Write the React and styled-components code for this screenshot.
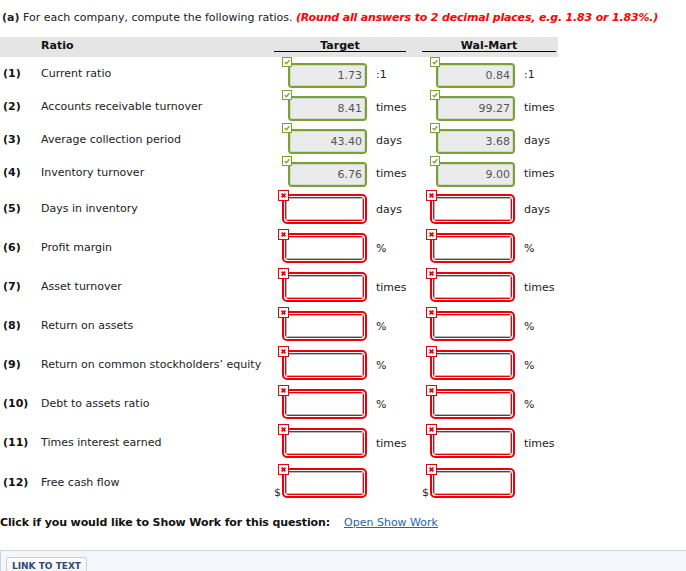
import React from "react";
import styled, { createGlobalStyle } from "styled-components";

const Global = createGlobalStyle`
  html, body { margin: 0; padding: 0; background: #fff; }
  body { font-family: "DejaVu Sans", Verdana, sans-serif; font-size: 11px; color: #222; }
`;

const Page = styled.div`
  width: 686px;
  height: 571px;
  overflow: hidden;
  display: flex;
  flex-direction: column;
`;

const Heading = styled.div`
  margin: 11px 0 0 2px;
  line-height: 13px;
  white-space: nowrap;
`;

const Strong = styled.b`
  font-weight: bold;
`;

const Hint = styled.span`
  color: #f00;
  font-weight: bold;
  font-style: italic;
  letter-spacing: -0.17px;
`;

const Table = styled.div`
  margin-top: 13px;
  width: 558px;
  display: flex;
  flex-direction: column;
`;

const HeaderRow = styled.div`
  display: grid;
  grid-template-columns: 274px 132px 16px 136px;
  background: #e5e5e5;
  height: 20px;
  font-weight: bold;
  color: #111;
`;

const HeadCell = styled.div`
  height: 14px;
  line-height: 17px;
  text-align: ${(p) => (p.$left ? "left" : "center")};
  padding-left: ${(p) => (p.$left ? "41px" : "0")};
  border-bottom: ${(p) => (p.$line ? "1px solid #000" : "none")};
  margin-right: ${(p) => (p.$trim ? "2px" : "0")};
`;

const Row = styled.div`
  display: grid;
  grid-template-columns: 41px 233px 132px 16px 136px;
  height: ${(p) => p.$h}px;
`;

const Num = styled.div`
  font-weight: bold;
  padding-left: 3px;
  display: flex;
  align-items: center;
  color: #111;
`;

const Label = styled.div`
  display: flex;
  align-items: center;
  white-space: nowrap;
`;

const Cell = styled.div`
  display: flex;
  align-items: flex-start;
  padding-top: ${(p) => p.$pt}px;
  padding-left: ${(p) => p.$pl}px;
`;

const Field = styled.div`
  position: relative;
  flex: none;
`;

const GreenBox = styled.div`
  width: 75px;
  height: 21px;
  border: 2px solid #78a232;
  border-radius: 4px;
  background: #fff;
  display: flex;
`;

const GreenInput = styled.div`
  flex: 1;
  background: #ebebeb;
  border: 1px solid #d6d6d6;
  border-radius: 2px;
  color: #555;
  text-align: right;
  padding-right: 2px;
  line-height: 19px;
`;

const RedBox = styled.div`
  width: 79px;
  height: 24px;
  border: 2px solid #e8000a;
  border-radius: 5px;
  padding: 1px;
  background: #fff;
  display: flex;
`;

const RedInner = styled.div`
  flex: 1;
  border: 1px solid #e8000a;
  border-radius: 3px;
  display: flex;
`;

const RedInput = styled.div`
  flex: 1;
  border: 1px solid #b8b8b8;
  background: #fff;
`;

const Badge = styled.svg`
  position: absolute;
  left: ${(p) => p.$off}px;
  top: ${(p) => p.$off}px;
  display: block;
`;

const Dollar = styled.span`
  position: absolute;
  left: -8px;
  bottom: -1px;
  line-height: 13px;
  color: #222;
`;

const Unit = styled.div`
  align-self: center;
  margin-left: ${(p) => p.$ml}px;
  margin-top: ${(p) => p.$mt}px;
  white-space: nowrap;
  color: #222;
`;

const ShowWork = styled.div`
  margin-top: 14px;
  display: flex;
  align-items: center;
  line-height: 13px;
  white-space: nowrap;
`;

const ShowLabel = styled.span`
  font-weight: bold;
  color: #111;
  letter-spacing: -0.11px;
`;

const ShowLink = styled.a`
  margin-left: 14px;
  color: #2a64a8;
  text-decoration: underline;
  cursor: pointer;
`;

const BottomBar = styled.div`
  margin-top: 21px;
  flex: 1;
  background: #f3f6fa;
  border-top: 1px solid #cdd4dc;
  border-left: 1px solid #cdd4dc;
  padding: 6px 0 0 5px;
`;

const LinkButton = styled.div`
  display: inline-block;
  font-size: 9px;
  font-weight: bold;
  color: #2c4a7c;
  background: linear-gradient(#ffffff, #f0f0f0);
  border: 1px solid #cfcfcf;
  border-bottom: none;
  border-radius: 3px 3px 0 0;
  padding: 3px 5px 3px 5px;
  line-height: 11px;
`;

function CheckIcon() {
  return (
    <Badge $off={-6} width="10" height="10" viewBox="0 0 10 10">
      <rect x="0.5" y="0.5" width="9" height="9" fill="#fff" stroke="#78a232" />
      <path d="M2.6 5.1 L4.3 6.7 L7.4 3.3" fill="none" stroke="#78a232" strokeWidth="1.3" />
    </Badge>
  );
}

function CrossIcon() {
  return (
    <Badge $off={-4} width="11" height="11" viewBox="0 0 11 11">
      <rect x="0.5" y="0.5" width="10" height="10" fill="#fff" stroke="#e8000a" />
      <path d="M3.6 3.6 L7.4 7.4 M7.4 3.6 L3.6 7.4" fill="none" stroke="#e8000a" strokeWidth="1.7" />
    </Badge>
  );
}

function Answer({ value, unit, dollar }) {
  if (value !== undefined) {
    return (
      <Cell $pt={6} $pl={14}>
        <Field>
          <GreenBox>
            <GreenInput>{value}</GreenInput>
          </GreenBox>
          <CheckIcon />
        </Field>
        {unit && <Unit $ml={9} $mt={-5}>{unit}</Unit>}
      </Cell>
    );
  }
  return (
    <Cell $pt={dollar ? 6 : 5} $pl={8}>
      <Field>
        <RedBox>
          <RedInner>
            <RedInput />
          </RedInner>
        </RedBox>
        <CrossIcon />
        {dollar && <Dollar>$</Dollar>}
      </Field>
      {unit && <Unit $ml={9} $mt={-4}>{unit}</Unit>}
    </Cell>
  );
}

const rows = [
  { n: "(1)", label: "Current ratio", t: "1.73", w: "0.84", unit: ":1" },
  { n: "(2)", label: "Accounts receivable turnover", t: "8.41", w: "99.27", unit: "times" },
  { n: "(3)", label: "Average collection period", t: "43.40", w: "3.68", unit: "days" },
  { n: "(4)", label: "Inventory turnover", t: "6.76", w: "9.00", unit: "times" },
  { n: "(5)", label: "Days in inventory", unit: "days" },
  { n: "(6)", label: "Profit margin", unit: "%" },
  { n: "(7)", label: "Asset turnover", unit: "times" },
  { n: "(8)", label: "Return on assets", unit: "%" },
  { n: "(9)", label: "Return on common stockholders\u2019 equity", unit: "%" },
  { n: "(10)", label: "Debt to assets ratio", unit: "%" },
  { n: "(11)", label: "Times interest earned", unit: "times" },
  { n: "(12)", label: "Free cash flow", unit: "", dollar: true },
];

export default function App() {
  return (
    <>
      <Global />
      <Page>
        <Heading>
          <Strong>(a)</Strong> For each company, compute the following ratios.{" "}
          <Hint>(Round all answers to 2 decimal places, e.g. 1.83 or 1.83%.)</Hint>
        </Heading>
        <Table>
          <HeaderRow>
            <HeadCell $left>Ratio</HeadCell>
            <HeadCell $line>Target</HeadCell>
            <div />
            <HeadCell $line $trim>Wal-Mart</HeadCell>
          </HeaderRow>
          {rows.map((r, i) => {
            const filled = r.t !== undefined;
            const h = filled ? 33 : r.dollar ? 40 : 39;
            return (
              <Row key={i} $h={h}>
                <Num>{r.n}</Num>
                <Label>{r.label}</Label>
                <Answer value={r.t} unit={r.unit} dollar={r.dollar} />
                <div />
                <Answer value={r.w} unit={r.unit} dollar={r.dollar} />
              </Row>
            );
          })}
        </Table>
        <ShowWork>
          <ShowLabel>Click if you would like to Show Work for this question:</ShowLabel>
          <ShowLink>Open Show Work</ShowLink>
        </ShowWork>
        <BottomBar>
          <LinkButton>LINK TO TEXT</LinkButton>
        </BottomBar>
      </Page>
    </>
  );
}
